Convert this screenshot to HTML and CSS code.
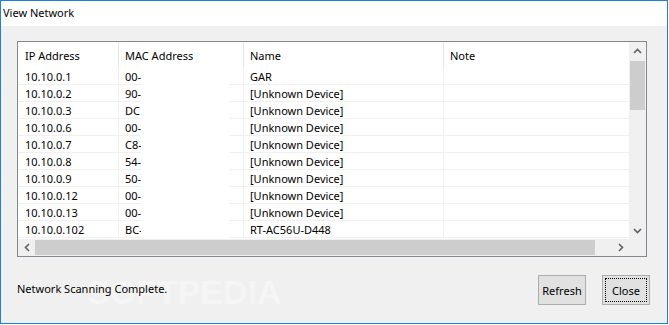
FILE: index.html
```html
<!DOCTYPE html>
<html>
<head>
<meta charset="utf-8">
<link rel="stylesheet" href="styles.css">
</head>
<body>
<div class="window">
  <div class="titlebar">View Network</div>
  <div class="content">
    <div class="listbox">
      <div class="main">
        <div class="table">
          <div class="row header">
            <div class="cell c1">IP Address</div>
            <div class="cell c2">MAC Address</div>
            <div class="cell c3">Name</div>
            <div class="cell c4">Note</div>
          </div>
          <div class="row"><div class="cell c1">10.10.0.1</div><div class="cell c2">00-</div><div class="cell c3">GAR</div><div class="cell c4"></div></div>
          <div class="row"><div class="cell c1">10.10.0.2</div><div class="cell c2">90-</div><div class="cell c3">[Unknown Device]</div><div class="cell c4"></div></div>
          <div class="row"><div class="cell c1">10.10.0.3</div><div class="cell c2">DC</div><div class="cell c3">[Unknown Device]</div><div class="cell c4"></div></div>
          <div class="row"><div class="cell c1">10.10.0.6</div><div class="cell c2">00-</div><div class="cell c3">[Unknown Device]</div><div class="cell c4"></div></div>
          <div class="row"><div class="cell c1">10.10.0.7</div><div class="cell c2">C8-</div><div class="cell c3">[Unknown Device]</div><div class="cell c4"></div></div>
          <div class="row"><div class="cell c1">10.10.0.8</div><div class="cell c2">54-</div><div class="cell c3">[Unknown Device]</div><div class="cell c4"></div></div>
          <div class="row"><div class="cell c1">10.10.0.9</div><div class="cell c2">50-</div><div class="cell c3">[Unknown Device]</div><div class="cell c4"></div></div>
          <div class="row"><div class="cell c1">10.10.0.12</div><div class="cell c2">00-</div><div class="cell c3">[Unknown Device]</div><div class="cell c4"></div></div>
          <div class="row"><div class="cell c1">10.10.0.13</div><div class="cell c2">00-</div><div class="cell c3">[Unknown Device]</div><div class="cell c4"></div></div>
          <div class="row"><div class="cell c1">10.10.0.102</div><div class="cell c2">BC-</div><div class="cell c3">RT-AC56U-D448</div><div class="cell c4"></div></div>
          <div class="mask"></div>
        </div>
        <div class="vscroll">
          <div class="arrow">
            <svg width="9" height="6" viewBox="0 0 9 6"><path d="M1 5 L4.5 1.5 L8 5" fill="none" stroke="#606060" stroke-width="1.6"/></svg>
          </div>
          <div class="vtrack"><div class="vthumb"></div></div>
          <div class="arrow">
            <svg width="9" height="6" viewBox="0 0 9 6"><path d="M1 1 L4.5 4.5 L8 1" fill="none" stroke="#606060" stroke-width="1.6"/></svg>
          </div>
        </div>
      </div>
      <div class="hscroll">
        <div class="arrow">
          <svg width="6" height="9" viewBox="0 0 6 9"><path d="M5 1 L1.5 4.5 L5 8" fill="none" stroke="#606060" stroke-width="1.6"/></svg>
        </div>
        <div class="htrack"><div class="hthumb"></div></div>
        <div class="arrow">
          <svg width="6" height="9" viewBox="0 0 6 9"><path d="M1 1 L4.5 4.5 L1 8" fill="none" stroke="#606060" stroke-width="1.6"/></svg>
        </div>
        <div class="corner"></div>
      </div>
    </div>
    <div class="footer">
      <div class="watermark">SOFTPEDIA</div>
      <div class="status">Network Scanning Complete.</div>
      <div class="buttons">
        <button class="btn">Refresh</button>
        <button class="btn default"><span class="focus">Close</span></button>
      </div>
    </div>
  </div>
</div>
</body>
</html>
```

FILE: styles.css
```css
* { box-sizing: border-box; }
html, body { margin: 0; padding: 0; background: #ffffff; }
body {
  font-family: "Noto Sans", "Open Sans", sans-serif;
  font-size: 11px;
  color: #000;
}
.window {
  width: 668px;
  height: 324px;
  border: 1px solid #1883d7;
  display: flex;
  flex-direction: column;
  background: #f0f0f0;
}
.titlebar {
  height: 25px;
  background: #fff;
  padding-left: 2px;
  line-height: 24px;
}
.content {
  flex: 1;
  padding: 15px 17px 0 16px;
  display: flex;
  flex-direction: column;
}
.listbox {
  width: 630px;
  height: 216px;
  border: 1px solid #828790;
  background: #fff;
  display: flex;
  flex-direction: column;
}
.main {
  display: flex;
  height: 197px;
}
.table {
  position: relative;
  width: 611px;
  overflow: hidden;
}
.row {
  display: flex;
  height: 17px;
  border-bottom: 1px solid #f0f0f0;
  line-height: 17px;
}
.row.header {
  height: 26px;
  border-bottom: none;
  line-height: 28px;
}
.cell {
  padding-left: 6px;
  white-space: nowrap;
  border-right: 1px solid #f0f0f0;
  overflow: hidden;
}
.header .cell { border-right-color: #e5e5e5; }
.c1 { width: 101px; padding-left: 7px; }
.c2 { width: 125px; }
.c3 { width: 200px; }
.c4 { flex: 1; border-right: none; }
.mask {
  position: absolute;
  left: 123px;
  top: 26px;
  width: 88px;
  height: 170px;
  background: #fff;
}
.vscroll {
  width: 17px;
  background: #f0f0f0;
  display: flex;
  flex-direction: column;
}
.arrow {
  width: 17px;
  height: 17px;
  display: flex;
  align-items: center;
  justify-content: center;
  flex: none;
}
.vtrack { flex: 1; padding: 2px 1px 0 1px; }
.vthumb { height: 49px; background: #cdcdcd; }
.hscroll {
  height: 17px;
  display: flex;
  background: #f0f0f0;
}
.htrack { width: 577px; padding: 1px 0; }
.hthumb { width: 560px; height: 15px; background: #cdcdcd; }
.corner { width: 17px; background: #f0f0f0; }
.footer {
  position: relative;
  flex: 1;
  display: flex;
  align-items: flex-start;
  padding-top: 18px;
}
.status {
  position: relative;
  margin-top: 5px;
  line-height: 18px;
}
.watermark {
  position: absolute;
  left: 70px;
  top: 16px;
  font-family: "Liberation Sans", sans-serif;
  font-weight: bold;
  font-size: 34px;
  color: #f5f5f5;
  pointer-events: none;
}
.buttons {
  margin-left: auto;
  display: flex;
  gap: 16px;
}
.btn {
  width: 48px;
  height: 30px;
  border: 1px solid #adadad;
  background: #e1e1e1;
  font-family: "Noto Sans", "Open Sans", sans-serif;
  font-size: 11px;
  color: #000;
  padding: 0;
  display: flex;
  align-items: center;
  justify-content: center;
}
.btn.default { padding: 2px; }
.focus {
  width: 100%;
  height: 100%;
  border: 1px dotted #000;
  display: flex;
  align-items: center;
  justify-content: center;
}
```
